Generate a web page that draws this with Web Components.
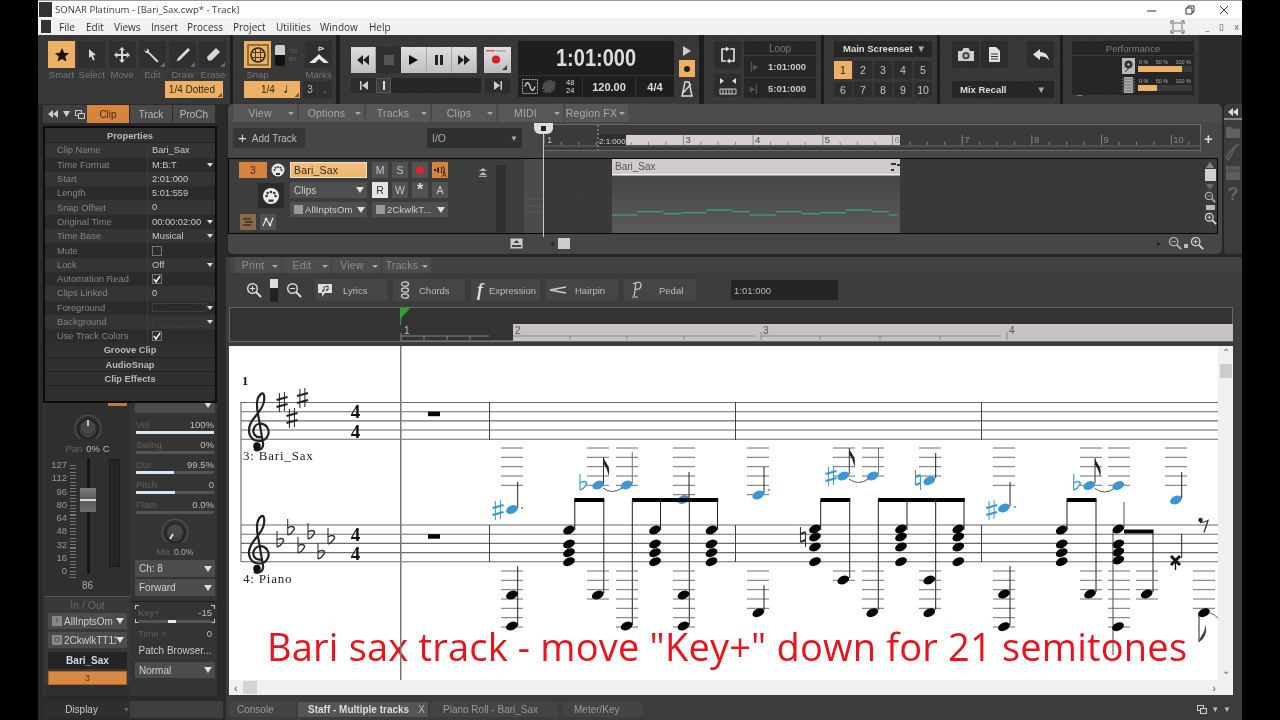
<!doctype html>
<html><head><meta charset="utf-8"><title>SONAR</title>
<style>html,body{margin:0;background:#000;height:100%;overflow:hidden}</style></head>
<body><sn-app></sn-app>
<script>
const BASE=`*{box-sizing:border-box}:host{font-family:"Liberation Sans",Arial,sans-serif}svg{display:block;flex:none}`;
function def(name,css,tpl){customElements.define(name,class extends HTMLElement{
  connectedCallback(){if(this.shadowRoot)return;const a=n=>this.getAttribute(n);
    this.attachShadow({mode:'open'}).innerHTML=`<style>${BASE}${css}</style>${tpl(a,this)}`}})}
const S=(w,h,inner,extra='')=>`<svg width="${w}" height="${h}" viewBox="0 0 ${w} ${h}" ${extra}>${inner}</svg>`;
const ICON={
 star:S(16,16,`<path d="M8 1l2.100 4.700 5 .5-3.800 3.400 1.100 5L8 12 3.600 14.600l1.100-5L.9 6.200l5-.5z" fill="#1b1410"/>`),
 select:S(14,16,`<path d="M4 2l7 6-3.200.5 2 4.200-1.700.8-2-4.200L4 11z" fill="#d8d8d8"/>`),
 move:S(18,18,`<path d="M9 1l3 3.200H10V8h3.800V6l3.200 3-3.200 3v-2H10v3.800h2L9 17l-3-3.200h2V10H4.200v2L1 9l3.200-3v2H8V4.200H6z" fill="#d8d8d8"/>`),
 edit:S(20,20,`<path d="M3 3l3.500 1 .7 3L16.500 16l-1.500 1.500L6.500 8.500 3.500 7.800 2 4.500l2 2 1.500-1.500-2-2z" fill="#d8d8d8"/>`),
 draw:S(18,18,`<path d="M14 2l2 2L6 14l-3.500 1.500L4 12z" fill="#d8d8d8"/>`),
 erase:S(18,18,`<path d="M12 2l4 4-8.500 8.500H4L3 11z" fill="#d8d8d8"/>`),
 snap:S(22,22,`<rect x="1" y="1" width="20" height="20" fill="none" stroke="#7a5a25" stroke-width="1.500"/><circle cx="11" cy="11" r="7" fill="none" stroke="#222" stroke-width="1.500"/><path d="M4 8.500h14M4 13.500h14M8.500 4v14M13.500 4v14" stroke="#4a3a1a"/>`),
 marks:S(22,18,`<path d="M11 1v4M11 1l5 1.500-5 1.500" stroke="#e8e8e8" fill="none"/><path d="M1 17l7-6 3-3 3 3 7 6h-5l-5-4-4 4z" fill="#e8e8e8"/>`),
 rew:S(14,10,`<path d="M7 0v10L1 5zM13 0v10L7 5z" fill="#222"/>`),
 ff:S(14,10,`<path d="M1 0v10l6-5zM7 0v10l6-5z" fill="#222"/>`),
 play:S(12,12,`<path d="M2 1v10l9-5z" fill="#111"/>`),
 pause:S(10,12,`<path d="M1 1h3v10H1zM6 1h3v10H6z" fill="#222"/>`),
 rec:S(24,24,`<path d="M2 3h9v1.500H2z" fill="#d55"/><path d="M12 3.500h10v.8H12z" fill="#777"/><circle cx="12" cy="12.500" r="4" fill="#d81e2a"/><path d="M23 23v-5l-5 5z" fill="#444"/>`),
 first:S(10,9,`<path d="M1 0h1.500v9H1zM9 0v9L3 4.500z" fill="#ccc"/>`),
 last:S(10,9,`<path d="M7.500 0H9v9H7.500zM1 0v9l6-4.500z" fill="#ccc"/>`),
 loop:S(16,18,`<path d="M6 3H2v12h4M10 3h4v12h-4" fill="none" stroke="#e4e4e4" stroke-width="1.600"/><path d="M6 .5L9.500 3 6 5.500zM10 12.500L6.500 15l3.500 2.500z" fill="#e4e4e4"/>`),
 keys:S(18,18,`<path d="M1 12h16v5H1z" fill="none" stroke="#ccc"/><path d="M4 12v5M7 12v5M10 12v5M13 12v5" stroke="#ccc"/><path d="M1 1l4 3-4 3zM17 1l-4 3 4 3z" fill="#ddd"/>`),
 cam:S(18,15,`<path d="M1 4h4l1.500-3h5L13 4h4v10H1z" fill="#cfcfcf"/><circle cx="9" cy="8.700" r="3.600" fill="#444"/><circle cx="9" cy="8.700" r="1.800" fill="#bbb"/>`),
 doc:S(13,17,`<path d="M1 1h7l4 4v11H1z" fill="#e2e2e2"/><path d="M3 8h7M3 10.500h7M3 13h7" stroke="#333"/>`),
 undo:S(18,14,`<path d="M8 1L1 6.500 8 12V8.500c4-.5 7 .5 9 4-.5-5-3-8-9-8.500z" fill="#e0e0e0"/>`),
 disk:S(13,16,`<rect x="0" y="0" width="13" height="16" fill="#b9b9b9"/><circle cx="6.500" cy="6.500" r="4" fill="#333"/><circle cx="6.500" cy="6.500" r="1.200" fill="#bbb"/><path d="M3 14l4-4" stroke="#333"/>`),
 chip:S(13,16,`<rect x="2" y="0" width="9" height="16" fill="#aaa"/><path d="M0 2h13M0 5h13M0 8h13M0 11h13M0 14h13" stroke="#777"/>`),
 sync:S(16,15,`<rect x=".5" y=".5" width="15" height="14" fill="#222" stroke="#aaa" stroke-dasharray="2 1"/><path d="M3 7.500c1.500-5 3.500-5 5 0s3.500 5 5 0" fill="none" stroke="#ccc" stroke-width="1.300"/>`),
 sync2:S(16,15,`<circle cx="8" cy="7.500" r="6.500" fill="#444"/><path d="M2 13L14 2M4 14L15 4M1 10L11 1" stroke="#666"/>`),
 metro:S(14,16,`<path d="M5 1h4l3 14H2z" fill="none" stroke="#ddd" stroke-width="1.400"/><path d="M3 12L11 3" stroke="#ddd" stroke-width="1.400"/>`),
 midi:S(14,14,`<circle cx="7" cy="7" r="6.500" fill="#e8e8e8"/><circle cx="3.500" cy="7" r="1" fill="#333"/><circle cx="10.500" cy="7" r="1" fill="#333"/><circle cx="7" cy="4" r="1" fill="#333"/><circle cx="4.500" cy="4.700" r="1" fill="#333"/><circle cx="9.500" cy="4.700" r="1" fill="#333"/><rect x="5" y="10" width="4" height="2" fill="#333"/>`),
 midiL:S(18,18,`<circle cx="9" cy="9" r="8" fill="#ececec"/><circle cx="4.500" cy="9" r="1.300" fill="#333"/><circle cx="13.500" cy="9" r="1.300" fill="#333"/><circle cx="9" cy="5" r="1.300" fill="#333"/><circle cx="5.700" cy="6" r="1.300" fill="#333"/><circle cx="12.300" cy="6" r="1.300" fill="#333"/><rect x="6.500" y="12.500" width="5" height="2.300" fill="#333"/>`),
 lanes:S(10,8,`<path d="M0 1h8M2 4h8M0 7h8" stroke="#333" stroke-width="1.400"/>`),
 auto:S(12,12,`<path d="M1 10L4 3l4 6 3-7" fill="none" stroke="#e8e8e8" stroke-width="1.200"/><circle cx="4" cy="3" r="1.300" fill="#eee"/><circle cx="8" cy="9" r="1.300" fill="#eee"/>`),
 mon:S(14,14,`<path d="M1 6h2v2H1zM4 5l2-1v6L4 9z" fill="#222"/><path d="M8 4q2 3 0 6M10 3q3 4 0 8" fill="none" stroke="#222"/><text x="9" y="14" font-size="7" font-family="Liberation Sans" fill="#222">A</text>`),
 arrows:S(8,9,`<path d="M4 0L8 3H0zM4 4l4 3H0z" fill="#b8b8b8"/><rect y="7.800" width="8" height="1" fill="#b8b8b8"/>`),
 strack:S(13,11,`<rect x=".5" y=".5" width="12" height="10" fill="#ccc"/><path d="M2 7h9v2H2z" fill="#444"/><path d="M6.500 2l3 3h-6z" fill="#444"/>`),
 folder:S(14,12,`<path d="M0 1h5l1 1.500h8V12H0z" fill="#616161"/>`),
 brush:S(16,18,`<path d="M14 1c-3 2-6 7-7 10L3 17c-2-2-2-5 1-6 1-3 5-8 10-10z" fill="none" stroke="#5e5e5e" stroke-width="1.500"/>`),
 kbd:S(14,14,`<rect width="14" height="14" fill="#5e5e5e"/><path d="M0 5h14M3 0v5M6 0v5M9 0v5M12 0v5" stroke="#444"/>`),
 lyrics:S(16,15,`<path d="M1 1h14v9H8l-3 4v-4H1z" fill="#ddd"/><path d="M7 8V4l4-1v4" fill="none" stroke="#444"/><circle cx="6" cy="8" r="1" fill="#444"/><circle cx="10" cy="7" r="1" fill="#444"/>`),
 chords:S(12,18,`<g fill="none" stroke="#ccc" stroke-width="1.300"><ellipse cx="6" cy="3" rx="3.500" ry="2.200"/><ellipse cx="6" cy="9" rx="3.500" ry="2.200"/><ellipse cx="6" cy="15" rx="3.500" ry="2.200"/></g>`),
 hairpin:S(18,8,`<path d="M17 1L1 4l16 3" fill="none" stroke="#ccc" stroke-width="1.300"/>`),
 pedal:S(14,18,`<path d="M3 3c4-3 9-2 8 2s-5 4-6 2M6 2c-1 5-1 9-2 13M2 16h6" fill="none" stroke="#ccc" stroke-width="1.200"/>`),
 tile:S(10,9,`<rect x=".5" y=".5" width="6" height="5" fill="none" stroke="#ccc"/><rect x="3.500" y="3.500" width="6" height="5" fill="#444" stroke="#ccc"/>`),
 corner:S(5,5,`<path d="M5 0v5H0z" fill="#6b6b6b"/>`)
};
const mag=(sign,s=16,c='#ddd')=>`<svg width="${s}" height="${s}" viewBox="0 0 16 16"><circle cx="6.500" cy="6.500" r="4.800" fill="none" stroke="${c}" stroke-width="1.400"/><path d="M10 10l5 5" stroke="${c}" stroke-width="2"/><path d="M4 6.500h5${sign=='+'?'M6.500 4v5':''}" stroke="${c}"/></svg>`;
const HATCH=`repeating-linear-gradient(135deg,#343434 0 1px,#3a3a3a 1px 3px)`;

def('sn-titlebar',`:host{display:flex;align-items:center;height:18px;background:#fff;border-top:1px solid #9a9a9a;font-size:9.600px;color:#3a3a3a;font-family:"Open Sans",sans-serif;padding:0 13px 0 1px}
.ic{width:13px;height:15px;background:#333;margin-right:3px}
.t{flex:1}.w{display:flex;align-items:center;color:#444}`,
()=>`<div class="ic"></div><div class="t">SONAR Platinum - [Bari_Sax.cwp* - Track]</div>
<div class="w">${S(10,10,'<path d="M0 6h9" stroke="#333"/>')}<span style="width:28px"></span>${S(10,10,'<path d="M1 3h6v6H1zM3 3V1h6v6H7" fill="none" stroke="#333"/>')}<span style="width:24px"></span>${S(10,10,'<path d="M1 1l8 8M9 1l-8 8" stroke="#333"/>')}</div>`);

def('sn-menubar',`:host{display:flex;align-items:center;height:17px;background:#f1f1f1;font-size:10px;color:#333;font-family:"Open Sans",sans-serif;padding-left:3px}
.ic{width:10px;height:13px;background:#333;margin-right:8px}
span{flex:none}.r{margin-left:auto;display:flex;align-items:center;gap:10px;padding-right:3px;color:#555;font-size:9px}`,
()=>{const xs=[['File',27],['Edit',28],['Views',37],['Insert',36],['Process',46],['Project',43],['Utilities',44],['Window',49],['Help',30]];
return `<div class="ic"></div>${xs.map(([t,w])=>`<span style="width:${w}px">${t}</span>`).join('')}
<div class="r">${S(15,14,'<path d="M1 4V1h3M11 1h3v3M14 10v3h-3M4 13H1v-3" fill="none" stroke="#555"/><rect x="3" y="3" width="9" height="8" fill="none" stroke="#777"/>')}<span style="margin-left:10px">_</span><span>▯</span><span>x</span></div>`});

def('sn-tool',`:host{display:block;width:27px;position:relative}
.b{width:27px;height:27px;background:#2f2f2f;display:flex;align-items:center;justify-content:center;position:relative}
.b.on{background:#ecb165}
.l{font-size:9.500px;color:#757575;text-align:center;margin:1px -3px 0;white-space:nowrap;display:flex;justify-content:center}
.c{position:absolute;right:1px;bottom:1px;display:block}`,
a=>`<div class="b ${a('on')!==null?'on':''}"><slot></slot>${a('corner')!==null?`<span class="c">${ICON.corner}</span>`:''}</div><div class="l">${a('label')}</div>`);

def('sn-pill',`:host{display:flex;align-items:center;height:17px;background:#ecb165;color:#33291a;font-size:10px;justify-content:flex-end;padding-right:8px;position:relative;flex:none}
i{position:absolute;right:1px;bottom:1px;width:4px;height:4px;background:linear-gradient(135deg,transparent 50%,#7d5a2a 50%)}`,
a=>`<slot></slot><i></i>`);

def('sn-tools',`:host{display:block;width:192px;height:69px;background:${HATCH};padding:6px 0 0 10px;flex:none}
.r{display:flex;gap:3.300px;height:40px}`,
()=>`<div class="r"><sn-tool label="Smart" on>${ICON.star}</sn-tool><sn-tool label="Select">${ICON.select}</sn-tool><sn-tool label="Move">${ICON.move}</sn-tool><sn-tool label="Edit" corner>${ICON.edit}</sn-tool><sn-tool label="Draw" corner>${ICON.draw}</sn-tool><sn-tool label="Erase" corner>${ICON.erase}</sn-tool></div>
<sn-pill style="width:58px;margin-left:117px">1/4 Dotted</sn-pill>`);

def('sn-snap',`:host{display:block;width:103px;height:69px;background:${HATCH};margin-left:3px;padding:6px 0 0 11px;flex:none}
.r{display:flex;height:40px}
.tg{width:10px;height:21px;margin:4px 0 0 4px;background:linear-gradient(#cfcfcf 0 10px,#111 10px);border-radius:2px}
.to{font-size:6px;color:#666;line-height:8px;margin:6px 0 0 4px;width:16px}
.r2{display:flex;align-items:center;font-size:10px;color:#bbb}
.c{width:14px;height:17px;background:#2f2f2f;display:flex;align-items:center;justify-content:center;margin-left:1px}
.n{font-size:15px;margin:-4px 0 0 8px;color:#222;line-height:10px}`,
()=>`<div class="r"><sn-tool label="Snap" on>${ICON.snap}</sn-tool><div class="tg"></div><div class="to">TO<br>BY</div><sn-tool label="Marks">${ICON.marks}</sn-tool></div>
<div class="r2"><sn-pill style="width:56px;justify-content:flex-start;padding-left:17px">1/4<span class="n">♩</span></sn-pill><span style="width:2px"></span><div class="c">3</div><div class="c">.</div></div>`);

def('sn-tbtn',`:host{display:flex;align-items:center;justify-content:center;width:25.200px;height:26px;background:linear-gradient(#dedede,#c0c0c0);border-right:1px solid #a8a8a8}`,()=>`<slot></slot>`);

def('sn-time',`:host{display:block;width:156px;height:56px;background:#1e1e1e;margin-left:6px;color:#dcdcdc;flex:none}
.big{height:34px;text-align:center;font:bold 20px/34px "Liberation Sans",sans-serif;transform:scaleY(1.150)}
.lo{display:flex;height:22px;border-top:1px solid #333;align-items:center;font-weight:bold;font-size:11px}
.lo>div{display:flex;align-items:center;justify-content:center;height:100%;border-left:1px solid #333}
.sg{font-size:7.500px;line-height:7.500px;text-align:center;font-weight:normal}`,
()=>`<div class="big">1:01:000</div><div class="lo"><div style="width:64px;border:0;gap:3px;justify-content:flex-start;padding-left:4px">${ICON.sync}${ICON.sync2}<span style="width:3px"></span><span class="sg">48<br>24</span></div><div style="width:53px">120.00</div><div style="width:39px">4/4</div></div>`);

def('sn-transport',`:host{display:flex;width:359px;height:69px;background:${HATCH};margin-left:4px;padding:6px 0 0 11px;flex:none}
.l{width:161px;flex:none;padding-top:6px}
.r{display:flex;height:26px}
.sq{width:10px;height:10px;background:#555}
.rec{margin-left:7px;width:27px;height:26px;background:linear-gradient(#e2e2e2,#bdbdbd);flex:none}
.r2{display:flex;align-items:center;height:15px;margin-top:5px}
.e{width:25px;height:15px;background:#2c2c2c;display:flex;align-items:center;justify-content:center;flex:none}
.sc{width:105px;height:15px;background:#262626;position:relative;flex:none}
.sc i{display:block;position:absolute;left:0;top:0;width:15px;height:15px;background:#3d3d3d;border:1px solid #555}
.sc i::after{content:"";position:absolute;left:6px;top:2px;width:2px;height:9px;background:#ddd}
.c{width:16px;margin-left:5px;display:flex;flex-direction:column;flex:none}
.c div{height:19px;display:flex;align-items:center;justify-content:center}
.on{background:#ecb165;height:17px!important;margin-bottom:2px}
.on i{width:6px;height:6px;border-radius:50%;background:#222;display:block}`,
()=>`<div class="l"><div class="r"><sn-tbtn>${ICON.rew}</sn-tbtn><sn-tbtn style="background:#2f2f2f;border:0"><span class="sq"></span></sn-tbtn><sn-tbtn>${ICON.play}</sn-tbtn><sn-tbtn>${ICON.pause}</sn-tbtn><sn-tbtn>${ICON.ff}</sn-tbtn><div class="rec">${ICON.rec}</div></div>
<div class="r2"><div class="e">${ICON.first}</div><div class="sc"><i></i></div><div class="e" style="margin-left:4px">${ICON.last}</div></div></div>
<sn-time></sn-time>
<div class="c"><div>${S(8,10,'<path d="M0 0v10l8-5z" fill="#ccc"/>')}</div><div class="on"><i></i></div><div>${ICON.metro}</div></div>`);

def('sn-loop',`:host{display:flex;width:117px;height:69px;background:${HATCH};margin-left:5px;padding:6px 0 0 10px;flex:none;color:#aaa}
.bc{width:27px;margin-right:3px}.bt{height:28px;background:#2d2d2d;display:flex;align-items:center;justify-content:center;margin-bottom:5px}
.bt+.bt{height:23px}
.p{width:72px;height:57px;background:#262626}
.h{height:15px;text-align:center;font-size:10px;line-height:15px;color:#777;border-bottom:1px solid #3a3a3a}
.w{display:flex;align-items:center;height:21px;font:bold 9.500px "Liberation Sans",sans-serif;color:#c8c8c8;padding-left:6px;gap:10px}
.w+.w{border-top:1px solid #3a3a3a}.w b{color:#555;font-size:10px;width:8px}`,
()=>`<div class="bc"><div class="bt">${ICON.loop}</div><div class="bt">${ICON.keys}</div></div>
<div class="p"><div class="h">Loop</div><div class="w"><b>|▸</b><span>1:01:000</span></div><div class="w"><b>▸|</b><span>5:01:000</span></div></div>`);

def('sn-screens',`:host{display:block;width:113px;height:69px;background:${HATCH};margin-left:3px;padding:6px 0 0 10px;flex:none;color:#c4c4c4}
.h{width:98px;height:16px;background:#262626;font:bold 9.500px/16px "Liberation Sans",sans-serif;color:#ddd;padding-left:9px;display:flex;justify-content:space-between;padding-right:6px}
.g{display:grid;grid-template-columns:repeat(5,18px);gap:3px 2px;margin-top:4px;font-size:10.500px}
.g div{height:18px;background:#2d2d2d;display:flex;align-items:center;justify-content:center}
.g .on{background:#ecb165;color:#222}.g .s{height:15px}`,
()=>`<div class="h"><span>Main Screenset</span><span style="color:#aaa">▼</span></div>
<div class="g"><div class="on">1</div><div>2</div><div>3</div><div>4</div><div>5</div><div class="s">6</div><div class="s">7</div><div class="s">8</div><div class="s">9</div><div class="s">10</div></div>`);

def('sn-mix',`:host{display:block;width:120px;height:69px;background:${HATCH};margin-left:3px;padding:6px 0 0 12px;flex:none}
.r{display:flex;height:34px}.b{width:27px;height:27px;background:#2d2d2d;display:flex;align-items:center;justify-content:center;margin-right:2px}
.d{width:102px;height:17px;margin-top:6px;background:#262626;color:#ddd;font:bold 9.500px/17px "Liberation Sans",sans-serif;padding:0 8px;display:flex;justify-content:space-between}`,
()=>`<div class="r"><div class="b">${ICON.cam}</div><div class="b">${ICON.doc}</div><div class="b" style="margin-left:17px">${ICON.undo}</div></div><div class="d"><span>Mix Recall</span><span style="color:#aaa">▼</span></div>`);

def('sn-perf',`:host{display:block;width:136px;height:69px;background:${HATCH};margin-left:3px;padding:6px 0 0 9px;flex:none}
.p{width:122px;height:54px;background:#262626;position:relative}
.h{height:15px;text-align:center;font-size:9.500px;line-height:15px;color:#7f7f7f;border-bottom:1px solid #3a3a3a}
.m{margin-left:50px;display:flex;align-items:center;height:19px;gap:3px}
.t{font-size:5.500px;color:#aaa;display:flex;justify-content:space-between;width:54px;line-height:7px;padding:0 1px}
.b{width:54px;height:6px;background:#3a3a3a}.b i{display:block;height:6px;background:#ecb165}
.d{font-size:9px;color:#aaa;position:absolute;left:5px;bottom:-1px}`,
()=>`<div class="p"><div class="h">Performance</div>
<div class="m">${ICON.disk}<div><div class="t"><span>0 %</span><span>50 %</span><span>100 %</span></div><div class="b"><i style="width:44px"></i></div></div></div>
<div class="m">${ICON.chip}<div><div class="t"><span>0 %</span><span>50 %</span><span>100 %</span></div><div class="b"><i style="width:19px"></i></div></div></div>
<div class="d">_</div></div>`);

def('sn-toolbar',`:host{display:flex;height:69px;background:#1d1d1d}
.f{flex:1;background:#2b2b2b}`,
()=>`<sn-tools></sn-tools><sn-snap></sn-snap><sn-transport></sn-transport><sn-loop></sn-loop><sn-screens></sn-screens><sn-mix></sn-mix><sn-perf></sn-perf><div class="f"></div>`);

def('sn-props',`:host{display:block;width:174px;height:277px;margin-top:3px;background:#2f2f2f;border:2px solid #0c0c0c;color:#c9c9c9;font-size:9.300px;position:relative}
.r{display:grid;grid-template-columns:91px 1fr;height:14.300px;align-items:center;padding-left:12px}
.r:nth-child(odd){background:#343434}.r:nth-child(even){background:#2b2b2b}
.l{color:#848484}
.v{position:relative;padding-left:4px;height:100%;line-height:14.300px;border-left:1px solid #3f3f3f;margin-left:-1px;display:flex;align-items:center}
.a{position:absolute;right:2px;top:5px;border:3px solid transparent;border-top:4px solid #ddd;border-bottom:0}
.h{height:14.300px;text-align:center;font-weight:bold;line-height:14.300px;color:#b9b9b9;background:#303030;border-bottom:1px solid #222}
.cb{width:10px;height:10px;border:1px solid #777;background:#2b2b2b;display:flex;align-items:center;justify-content:center}
.sw{width:55px;height:9px;border:1px solid #3d3d3d;background:linear-gradient(to top right,transparent 49%,#3b3b3b 50%,transparent 51%),linear-gradient(to bottom right,transparent 49%,#3b3b3b 50%,transparent 51%)}`,
()=>{const ck=S(8,8,'<path d="M1 4l2 3 4-6" fill="none" stroke="#eee" stroke-width="1.600"/>');
const rows=[['Clip Name','Bari_Sax'],['Time Format','M:B:T',1],['Start','2:01:000'],['Length','5:01:559'],['Snap Offset','0'],['Original Time','00:00:02:00',1],['Time Base','Musical',1],['Mute','<span class="cb"></span>'],['Lock','Off',1],['Automation Read',`<span class="cb">${ck}</span>`],['Clips Linked','0'],['Foreground','<span class="sw"></span>',1],['Background','<span class="sw"></span>',1],['Use Track Colors',`<span class="cb">${ck}</span>`]];
return `<div class="h" style="margin-top:1px">Properties</div>`+rows.map(([l,v,d])=>`<div class="r"><span class="l">${l}</span><span class="v">${v}${d?'<i class="a"></i>':''}</span></div>`).join('')
+['Groove Clip','AudioSnap','Clip Effects'].map(t=>`<div class="h">${t}</div>`).join('')});

def('sn-knob',`:host{display:block;width:28px;height:28px;position:relative;margin:0 auto}`,
a=>`<svg width="28" height="28" viewBox="0 0 28 28"><path d="M6 23.500A13 13 0 1 1 22 23.500" fill="none" stroke="#4d4d4d" stroke-width="1.500"/><circle cx="14" cy="14" r="9.500" fill="#3c3c3c" stroke="#1f1f1f" stroke-width="1.500"/><circle cx="14" cy="12" r="7" fill="#474747"/><path d="${a('tick')}" stroke="#f0f0f0" stroke-width="1.500"/></svg>`);

def('sn-drop',`:host{display:flex;align-items:center;height:16px;background:#4c4c4c;color:#cfcfcf;font-size:10px;padding:0 3px 0 4px;white-space:nowrap;overflow:hidden;flex:none}
.t{flex:1;overflow:hidden;display:flex;align-items:center}i{border:4px solid transparent;border-top:6px solid #ddd;border-bottom:0;flex:none}`,
a=>`<span class="t"><slot></slot></span><i></i>`);

def('sn-slider',`:host{display:block;height:14px;margin-bottom:6px;position:relative;padding:0 1px}
.t{display:flex;justify-content:space-between;height:11px;line-height:11px;font-size:9.500px;color:#bdbdbd}.t span:first-child{color:#5f5f5f}
.b{height:2.500px;background:#545454;margin-top:1px}.b i{display:block;height:100%;background:#d7e6f0}`,
a=>`<div class="t"><span>${a('label')}</span><span>${a('value')}</span></div><div class="b"><i style="width:${a('pct')}%"></i></div>`);

def('sn-strip',`:host{display:flex;width:174px;height:293px;background:#343434;color:#bbb;font-size:9.500px;position:relative}
.L{width:85px;margin-left:2px;flex:none;background:#2f2f2f}
.R{width:83px;margin-left:4px;flex:none;padding:0 2px 0 1px}
.tk{height:6px;display:flex;justify-content:flex-end;padding-right:3px}.tk i{display:block;width:19px;height:3px;background:#c07a3c}
.pn{display:flex;justify-content:center;gap:4px;height:11px;line-height:11px;margin:0 0 4px;color:#bbb}.pn span:first-child{color:#666}
.f{height:120px;display:flex;position:relative}
.n{width:22px;display:flex;flex-direction:column;align-items:flex-end;font-size:9.500px;color:#999}
.n span{height:13.300px;line-height:13.300px}
.tc{width:6px;margin-left:3px;height:115px;margin-top:7px;background:repeating-linear-gradient(#777 0 1px,transparent 1px 3.300px)}
.tr{width:3px;height:116px;background:#151515;margin-left:11px}
.mt{width:11px;height:108px;background:#252525;margin:1px 0 0 19px;border:1px solid #1c1c1c}
.cap{position:absolute;left:35px;top:30px;width:16px;height:24px;background:linear-gradient(#7d7d7d,#5b5b5b 45%,#cfcfcf 46%,#e8e8e8 54%,#5b5b5b 55%,#6e6e6e);border-radius:1px}
.v{height:16px;text-align:center;line-height:16px;color:#aaa;font-size:10px;margin-bottom:2px}
.sec{background:#383838;border-top:1px solid #5a5a5a;padding:0 3px}
.ti{height:16px;line-height:16px;text-align:center;font-size:10.500px;color:#686868}
.nm{margin-top:4px;height:17px;background:#242424;color:#cfdbe6;text-align:center;line-height:17px;font-weight:bold;font-size:10px}
.or{margin-top:2px;height:14px;background:#d88a45;border:1px solid #a9672e;color:#5a3518;text-align:center;line-height:12px;font-size:9.500px}
.io{width:10px;height:10px;background:#888;color:#333;font-size:7px;line-height:10px;text-align:center;display:block;margin-right:2px;flex:none}
.mx{display:flex;justify-content:center;gap:4px;height:10px;line-height:10px;color:#aaa;font-size:8.500px;margin-bottom:3px}.mx span:first-child{color:#666}
.sep{border-top:1px solid #1b1b1b;margin:5px -3px 3px}
.key{position:relative;height:18px;padding:2px 0 0;margin-bottom:4px;background:
 linear-gradient(#ccc,#ccc) 0 0/4px 1px no-repeat,linear-gradient(#ccc,#ccc) 0 0/1px 4px no-repeat,
 linear-gradient(#ccc,#ccc) 100% 0/4px 1px no-repeat,linear-gradient(#ccc,#ccc) 100% 0/1px 4px no-repeat,
 linear-gradient(#ccc,#ccc) 0 100%/4px 1px no-repeat,linear-gradient(#ccc,#ccc) 0 100%/1px 4px no-repeat,
 linear-gradient(#ccc,#ccc) 100% 100%/4px 1px no-repeat,linear-gradient(#ccc,#ccc) 100% 100%/1px 4px no-repeat}
.row{display:flex;justify-content:space-between;padding:0 3px;height:11px;line-height:11px;color:#bdbdbd}.row span:first-child{color:#5f5f5f}
.kb{height:2.500px;margin:2px 3px 0;background:#555;position:relative}.kb i{position:absolute;left:30px;width:8px;height:100%;background:#e8e8e8}
.pb{text-align:center;height:18px;line-height:14px;color:#ccc;font-size:10px;margin-top:3px}`,
()=>`<div class="L"><div class="tk"><i></i></div><div style="height:6px"></div><sn-knob tick="M14 5v6"></sn-knob><div class="pn"><span>Pan</span><span>0% C</span></div>
<div class="f"><div class="n">${[127,112,96,80,64,48,32,16,0].map(n=>`<span>${n}</span>`).join('')}</div><div class="tc"></div><div class="tr"></div><div class="mt"></div><div class="cap"></div></div>
<div class="v">86</div>
<div class="sec"><div class="ti">In / Out</div><sn-drop><span class="io">I</span>AllInptsOm</sn-drop><div style="height:3px"></div><sn-drop><span class="io">O</span>2CkwlkTT11</sn-drop><div class="nm">Bari_Sax</div><div class="or">3</div></div></div>
<div class="R"><div style="height:11px;overflow:hidden"><sn-drop style="margin-top:-6px">&nbsp;</sn-drop></div><div style="height:5px"></div>
<sn-slider label="Vel" value="100%" pct="100"></sn-slider><sn-slider label="Swing" value="0%" pct="0"></sn-slider><sn-slider label="Dur" value="99.5%" pct="49"></sn-slider><sn-slider label="Pitch" value="0" pct="50"></sn-slider><sn-slider label="Flam" value="0.0%" pct="0"></sn-slider>
<sn-knob tick="M9 20l3-5"></sn-knob><div class="mx"><span>Mix</span><span>0.0%</span></div>
<sn-drop style="height:17px">Ch: 8</sn-drop><div style="height:2px"></div><sn-drop style="height:17px">Forward</sn-drop>
<div class="sep"></div>
<div class="key"><div class="row"><span>Key+</span><span>-15</span></div><div class="kb"><i></i></div></div>
<div class="row" style="height:14px;line-height:14px"><span>Time +</span><span>0</span></div>
<div class="pb">Patch Browser...</div><sn-drop>Normal</sn-drop></div>`);

def('sn-inspector',`:host{display:block;width:188px;flex:none;padding-left:5px;background:#2a2a2a}
.tabs{display:flex;height:18px;align-items:stretch;font-size:10px;margin-top:1px;width:175px}
.ic{width:44px;display:flex;align-items:center;gap:5px;padding-left:5px;color:#ccc;background:#3f3f3f}
.t{width:42px;margin-right:1px;background:#4a4a4a;color:#bbb;display:flex;align-items:center;justify-content:center}
.t.on{background:#d6853f;color:#4a2a10}
.disp{display:flex;height:17px;margin-top:5px;background:#3e3e3e;width:180px}
.disp div{width:87px;background:#2e2e2e;color:#c9c9c9;font-size:10px;display:flex;align-items:center;justify-content:center;gap:25px;padding-left:22px}`,
()=>`<div class="tabs"><div class="ic">${S(10,8,'<path d="M5 0v8L0 4zM10 0v8L5 4z" fill="#ccc"/>')}${S(7,6,'<path d="M0 0h7L3.500 6z" fill="#ccc"/>')}${ICON.tile}</div><div class="t on">Clip</div><div class="t">Track</div><div class="t">ProCh</div></div>
<sn-props></sn-props><sn-strip></sn-strip>
<div class="disp"><div>Display<span style="color:#666;font-size:7px">▼</span></div></div>`);

def('sn-mbar',`:host{display:flex;height:18px;background:#4c4c4c;padding-left:4px;border-radius:5px 5px 0 0;flex:none}
.i{display:flex;align-items:center;justify-content:center;position:relative;background:var(--it,#575757);margin-right:1px;color:var(--tx,#a8a8a8);font-size:10.500px;height:100%;border-left:1px solid #484848;padding-right:10px;letter-spacing:.2px}
.i::after{content:"";position:absolute;right:3px;top:8px;border:3px solid transparent;border-top:3px solid #aaa;border-bottom:0}`,
a=>a('items').split('|').map(s=>{const[t,w]=s.split(':');return `<div class="i" style="width:${w}px">${t}</div>`}).join(''));

def('sn-ruler',`:host{display:block;flex:none;margin-top:1px}`,
(a)=>{const out=[];const x0=1;
 for(let i=0;i<10;i++){const x=x0+i*69.7;for(let k=1;k<4;k++)out.push(`<path d="M${x+k*17.4} 18v3" stroke="#888"/>`);out.push(`<path d="M${x} 11v10" stroke="#888"/>`);
  if(i!=1&&i!=0)out.push(`<text x="${x+2}" y="19" font-size="9.500" font-family="Liberation Sans" fill="${i<5?'#444':'#888'}">${i+1}</text>`)}
 return `<svg width="658" height="27" viewBox="0 0 658 27"><rect x=".5" y=".5" width="657" height="26" fill="#3a3a3a" stroke="#6a6a6a"/><path d="M0 22h658" stroke="#666"/><rect x="83" y="11" width="274" height="10" fill="#d5cfd0"/>${out.join('')}<text x="4" y="19" font-size="9.500" font-family="Liberation Sans" fill="#bbb">1</text><rect x="55" y="10" width="28" height="12" fill="#2e2e2e"/><text x="56" y="19.500" font-size="8" font-family="Liberation Sans" fill="#ddd">2:1:000</text><path d="M55 1v25" stroke="#aaa" stroke-dasharray="2 2"/></svg>`});

def('sn-tb',`:host{display:flex;align-items:center;justify-content:center;width:16px;height:16px;background:#525252;color:#c6c6c6;font-size:10.500px;flex:none}`,()=>`<slot></slot>`);

def('sn-track-header',`:host{display:flex;width:295px;height:74px;background:#3d3d3d;padding:3px 0 0 10px;flex:none;position:relative}
.L{width:46px;flex:none;margin-right:5px}
.L1{display:flex;align-items:center;height:16px;gap:4px}
.num{width:29px;height:16px;background:#d6853f;text-align:center;font-size:10.500px;line-height:16px;color:#4a2a10}
.big{width:26px;height:25px;background:#2b2b2b;margin:5px 0 0 19px;display:flex;align-items:center;justify-content:center}
.L3{display:flex;gap:4px;margin-top:6px;padding-left:1px}
.sq{width:16px;height:16px;background:#525252;display:flex;align-items:center;justify-content:center}
.M{width:77px;flex:none;margin-right:5px;display:flex;flex-direction:column;gap:4px}
.nm{height:16px;background:linear-gradient(#f3c07d,#ecb570);border:1px solid #e9e3d8;font-size:10.500px;line-height:14px;padding-left:3px;color:#3a2a18;letter-spacing:.2px}
.b{display:flex;gap:4px}
.R{width:76px;flex:none;display:flex;flex-direction:column;gap:4px}
.sb{display:block;width:9px;height:9px;background:#999;margin-right:2px;flex:none}
.x{width:15px;margin-left:31px;padding-top:6px}
.y{width:10px;height:67px;background:#303030;margin:3px 0 0 2px}`,
()=>`<div class="L"><div class="L1"><div class="num">3</div>${ICON.midi}</div><div class="big">${ICON.midiL}</div><div class="L3"><div class="sq" style="background:#8a6a48">${ICON.lanes}</div><div class="sq">${ICON.auto}</div></div></div>
<div class="M"><div class="nm">Bari_Sax</div><sn-drop style="height:16px;background:#4f4f4f">Clips</sn-drop><sn-drop style="height:15px;background:#4f4f4f;font-size:9.500px;letter-spacing:.1px;padding-right:2px"><span class="sb"></span>AllInptsOm</sn-drop></div>
<div class="R"><div class="b"><sn-tb>M</sn-tb><sn-tb>S</sn-tb><sn-tb><span style="width:8px;height:8px;border-radius:50%;background:#e3242f"></span></sn-tb><sn-tb style="background:#d6853f">${ICON.mon}</sn-tb></div>
<div class="b"><sn-tb style="background:#e4e4e4;color:#333">R</sn-tb><sn-tb>W</sn-tb><sn-tb style="font-size:16px;font-weight:bold;color:#ddd">*</sn-tb><sn-tb>A</sn-tb></div>
<sn-drop style="height:15px;background:#4f4f4f;font-size:9.500px;letter-spacing:.1px"><span class="sb"></span>2CkwlkT...</sn-drop></div>
<div class="x">${ICON.arrows}</div><div class="y"></div>`);

def('sn-clips',`:host{display:block;flex:none;width:680px;height:74px}`,
()=>{const segs=[[30,88,342],[88,148,332],[148,190,338],[190,248,335],[248,308,327],[308,348,332],[348,408,342],[408,468,332],[468,510,338],[510,570,335],[570,628,327],[628,668,332],[668,688,342]];
 const gx=x=>(600+x/2.306-525).toFixed(1), gy=y=>(100+y/3-158).toFixed(1);
 return `<svg width="680" height="74" viewBox="0 0 680 74"><defs><linearGradient id="g" x1="0" y1="0" x2="0" y2="1"><stop offset="0" stop-color="#454545"/><stop offset="1" stop-color="#5a5a5a"/></linearGradient></defs>
 <rect width="680" height="74" fill="#393939"/><rect width="18" height="74" fill="#4b4b4b"/><path d="M18 0v74" stroke="#5a5a5a"/><path d="M1 40h17M1 47h17M1 53h17" stroke="#5a5a5a"/>
 <rect x="88" y="15" width="288" height="59" fill="url(#g)"/><rect x="88" y="0" width="288" height="16" fill="#cfcacd"/><rect x="88" y="15" width="288" height="1.500" fill="#f2f2f2"/><text x="91" y="11" font-size="10" font-family="Liberation Sans" fill="#555">Bari_Sax</text>
 <path d="M367 4h5v2h-5zM373 5h3v2h-3zM367 10h3v2h-3z" fill="#333"/>
 ${segs.map(([a,b,y])=>`<path d="M${gx(a)} ${gy(y)}H${gx(b)}" stroke="#3aa56c" stroke-width="1.300"/>`).join('')}<rect x="54" y="36" width="1" height="1" fill="#666"/></svg>`});

def('sn-track',`:host{display:flex;flex-direction:column;width:994px;height:150px;background:#464646;border-radius:5px;position:relative;flex:none;margin-left:2px}
.tools{display:flex;height:36px;flex:none;position:relative;padding:1px 0 0 5px;align-items:flex-start}
.add{width:72px;height:20px;background:#363636;margin-top:5px;display:flex;align-items:center;gap:5px;padding-left:5px;color:#bbb;font-size:10px;flex:none}
.io{width:95px;height:20px;background:#303030;margin:5px 0 0 122px;display:flex;align-items:center;justify-content:space-between;padding:0 4px 0 5px;color:#aaa;font-size:10.500px;flex:none}
.plus{color:#ddd;font-size:15px;font-weight:bold;margin:7px 0 0 3px;flex:none}
.rows{display:flex;height:76px;border:1.500px solid #050505;flex:none;width:990px;background:#393939}
.sb{width:12px;flex:none;background:#3b3b3b;display:flex;flex-direction:column;align-items:center;padding-top:3px;gap:1px}
.sb i.t{width:11px;height:12px;background:#d4d0d0;display:block}
.up{border:4px solid transparent;border-bottom:6px solid #888;border-top:0}.dn{border:4px solid transparent;border-top:6px solid #666;border-bottom:0;margin-top:2px}
.bot{display:flex;align-items:center;height:18px;position:relative;padding-left:282px}
.thumb{width:12px;height:11px;background:#cfcbcb;margin-left:4px}
.zm{margin-left:auto;display:flex;align-items:center;gap:1px;padding-right:18px}
.ph{position:absolute;left:306px;top:19px;width:19px;height:11px;background:#ddd;border-radius:0 0 6px 6px;display:flex;align-items:center;justify-content:center}
.ph i{width:5px;height:5px;background:#222}
.ln{position:absolute;left:315px;top:30px;width:1px;height:103px;background:#c8c8c8}`,
()=>`<sn-mbar items="View:65|Options:66|Tracks:65|Clips:65|MIDI:66|Region FX:64"></sn-mbar>
<div class="tools"><div class="add"><span style="font-size:15px;line-height:14px;color:#ddd">+</span><span>Add Track</span></div><div class="io"><span>I/O</span><span style="font-size:8px">▼</span></div><sn-ruler style="margin-left:21px"></sn-ruler><span class="plus">+</span></div>
<div class="rows"><sn-track-header></sn-track-header><sn-clips></sn-clips><div class="sb"><i class="up"></i><i class="t"></i><i class="dn"></i>${mag('-',12,'#bbb')}<span style="width:9px;height:5px;background:#bbb;margin:1px 0"></span>${mag('+',13,'#ddd')}</div></div>
<div class="bot">${ICON.strack}<span style="color:#222;font-size:8px;margin-left:27px">◂</span><div class="thumb"></div><div class="zm"><span style="color:#222;font-size:8px;margin-right:6px">▸</span>${mag('-',14,'#bbb')}<span style="width:4px;height:4px;background:#bbb;margin:6px 1px 0"></span>${mag('+',14,'#ddd')}</div></div>
<div class="ph"><i></i></div><div class="ln"></div>`);

def('sn-side',`:host{display:flex;flex-direction:column;align-items:center;width:18px;margin-left:2px;height:150px;background:#3c3c3c;border-radius:4px 0 0 4px;padding-top:1px;flex:none;gap:5px}
.h{height:15px;width:100%;border-bottom:2px solid #888;display:flex;justify-content:center;align-items:center;margin-bottom:1px}
.q{font:bold 18px "Liberation Sans",sans-serif;color:#666;line-height:18px}`,
()=>`<div class="h">${S(10,8,'<path d="M5 0v8L0 4zM10 0v8L5 4z" fill="#ddd"/>')}</div>${ICON.folder}${ICON.brush}${ICON.kbd}<div class="q">?</div>`);

const Bl='#3a96d4';
function ln(x1,y1,x2,y2,c='#333',w=1){return `<path d="M${x1} ${y1}L${x2} ${y2}" stroke="${c}" stroke-width="${w}" fill="none"/>`}
const head=(x,y,c='#050505')=>`<ellipse cx="${x}" cy="${y}" rx="6.200" ry="4" transform="rotate(-24 ${x} ${y})" fill="${c}"/>`;
const stem=(x,a,b,c='#222')=>ln(x,a,x,b,c,1);
const dot=(x,y,c=Bl)=>`<circle cx="${x}" cy="${y}" r="1" fill="${c}"/>`;
const UP=[448,457.3,466.7,476,485.3,494.7],DN=[571,580.3,589.7,599,608.3,617.7,627];
const led=(x,ys)=>ys.map(y=>ln(x,y,x+22,y,'#5f5f5f',.9)).join('');
const sharp=(x,y,c=Bl)=>ln(x-2.600,y-9,x-2.600,y+10,c,1)+ln(x+2.400,y-10,x+2.400,y+9,c,1)+ln(x-5.500,y-2,x+5.500,y-5,c,2.300)+ln(x-5.500,y+5,x+5.500,y+2,c,2.300);
const flat=(x,y,c=Bl)=>ln(x-3,y-9,x-3,y+7,c,1.100)+`<path d="M${x-3} ${y}C${x+1} ${y-3} ${x+5} ${y-1} ${x+3} ${y+2}C${x+2} ${y+4} ${x} ${y+6} ${x-3} ${y+7}" fill="none" stroke="${c}" stroke-width="1.500"/>`;
const natural=(x,y,c=Bl)=>ln(x-2.500,y-10,x-2.500,y+5,c,1.100)+ln(x+2.500,y-5,x+2.500,y+10,c,1.100)+ln(x-2.500,y-3,x+2.500,y-5,c,2)+ln(x-2.500,y+5,x+2.500,y+3,c,2);
const flag=(x,y)=>`<path d="M${x} ${y}c1 6 8 8 5 19c-1-7-3-10-5-12z" fill="#222"/>`;
const tie=(a,b,y)=>`<path d="M${a} ${y+3}Q${(a+b)/2} ${y+10} ${b} ${y+3}" fill="none" stroke="#555" stroke-width="1"/>`;
const beam=(a,b,y=498,h=4)=>`<rect x="${a}" y="${y}" width="${b-a+.5}" height="${h}" fill="#050505"/>`;
const ch=(x,ys)=>ys.map(y=>head(x,y)).join('');
const num=(x,y,t)=>`<text x="${x}" y="${y}" font-family="Liberation Serif" font-weight="bold" font-size="19" text-anchor="middle" fill="#111">${t}</text>`;
const clef=(dy)=>`<g transform="translate(0 ${dy})"><path d="M261 437C255 438 252 433 254 428C256 423 263 422 267 427C271 433 267 441 259 441C251 441 247 433 250 425C253 416 263 411 264 401C265 395 263 392 261 394C257 397 256 404 258 414L263 443C264 449 258 452 254 449" fill="none" stroke="#222" stroke-width="2.200"/><circle cx="257" cy="446" r="3.800" fill="#111"/></g>`;
function score(){
 let s='';
 [[402.5,411.7,420.9,430,439.3],[525,534.2,543.4,552.6,561.8]].forEach(l=>l.forEach(y=>s+=ln(241,y,1219,y,'#6b6b6b',1.100)));
 s+=ln(241,402,241,562,'#666',1.100);[489.500,735.500,981.500].forEach(x=>{s+=ln(x,402,x,440,'#444',1)+ln(x,525,x,562,'#444',1)});
 s+=clef(0)+clef(122.500);
 s+=sharp(282,402,'#222')+sharp(292,418,'#222')+sharp(302.500,398,'#222');
 [[280,540],[290.700,528],[301,546],[311,532],[321,552],[331,537]].forEach(([x,y])=>s+=flat(x,y,'#333'));
 s+=num(355.500,418,'4')+num(355.500,437.500,'4')+num(355.500,540.500,'4')+num(355.500,560,'4');
 s+=`<rect x="428" y="411.700" width="12" height="4.500" fill="#050505"/><rect x="428" y="534.200" width="12" height="4.500" fill="#050505"/>`;
 s+=led(501,UP.slice(0,5))+sharp(498,510)+stem(517.700,482,508)+head(512,509.500,Bl)+dot(522,508);
 s+=led(587,UP.slice(0,5))+led(616,UP.slice(0,5))+flat(583,483)+head(598.300,485,Bl)+head(626.700,485,Bl)+stem(603.500,457,483,'#333')+flag(603.500,457)+tie(603,622,485)+stem(632.300,452,483,'#777');
 s+=led(673,UP)+head(683.300,499.500,Bl)+stem(689,472,498);
 s+=led(747,UP)+head(758.300,495,Bl)+stem(764,467,493)+dot(769,490);
 s+=led(833,UP.slice(0,4))+led(862,UP.slice(0,4))+sharp(831,476)+head(843.300,476,Bl)+head(872.700,476,Bl)+stem(849.300,448,474,'#333')+flag(849.300,448)+tie(849,868,476)+stem(878.500,448,474,'#777');
 s+=led(919,UP.slice(0,4))+natural(918,480)+head(929.300,480.700,Bl)+stem(935.700,453,478);
 s+=led(993,UP.slice(0,5))+sharp(991.700,510)+head(1004,508,Bl)+dot(1015,507)+stem(1010,482,506);
 s+=led(1080,UP.slice(0,5))+led(1108,UP.slice(0,5))+flat(1076.700,483)+head(1089.300,485.500,Bl)+head(1118.300,485.500,Bl)+stem(1095,458,483,'#333')+flag(1095,458)+tie(1095,1114,485.500);
 s+=led(1165,UP.slice(0,5))+head(1176,500,Bl)+stem(1181.700,472,498);
 const A=[530,544,552.700,561.700],B=[529,537,547,561.700];
 s+=led(501,DN)+stem(517.700,566,626)+ch(512,[595,626]);
 s+=ch(569,A)+stem(574.800,500,530)+beam(574.300,603.800)+stem(603.800,500,593)+led(587,DN.slice(0,4))+head(597.800,595);
 s+=beam(632,717.800)+stem(632.300,500,625)+led(616,DN)+head(626.700,626);
 s+=ch(655,A)+stem(660.500,500,530)+stem(689.300,500,625)+led(673,DN)+ch(683.500,[595,626]);
 s+=ch(711.500,A)+stem(717.500,500,530);
 s+=led(747,DN.slice(0,5))+head(758.300,612.700)+stem(764,585,610);
 s+=natural(803,537,'#333')+ch(815,B)+stem(820.700,500,530)+beam(820.500,849.800)+stem(849.700,500,578)+led(833,DN.slice(0,2))+head(843.300,580);
 s+=beam(878,964.300)+stem(878.300,500,610)+led(862,DN.slice(0,5))+head(872.300,612.700);
 s+=ch(901,B)+stem(907,500,530)+stem(935.700,500,610)+led(919,DN.slice(0,5))+ch(929.300,[580,612.700]);
 s+=ch(958.300,B)+stem(964,500,530);
 s+=led(993,DN)+stem(1010,566,625)+ch(1004,[594,626.700]);
 s+=ch(1061.700,A)+stem(1067,500,530)+beam(1066.700,1096)+stem(1096,500,592)+led(1080,DN.slice(0,4))+head(1090,594);
 s+=ch(1118.300,[529,544,552,560])+stem(1124,502,527,'#555')+stem(1113,532,655,'#444')+led(1108,DN)+head(1118,626.700);
 s+=beam(1124,1153,529.500,4)+stem(1153,532,592)+led(1136,DN.slice(0,4))+head(1146.700,594);
 s+=stem(1181.700,534,558)+`<path d="M1171 556l9 9M1180 556l-9 9" stroke="#111" stroke-width="3"/>`+ln(1175.500,560,1175.500,570,'#111',1.300);
 s+=`<circle cx="1200.500" cy="520" r="2.200" fill="#222"/><path d="M1200 522.500q4 0 8-2l-4 12" fill="none" stroke="#333" stroke-width="1.300"/>`;
 s+=led(1193,DN.slice(0,5))+head(1204,612.700)+stem(1199,613,642)+`<path d="M1199 642c1-7 7-9 6-18c3 8 0 14-6 18z" fill="#222" opacity=".85"/><path d="M1210 613q4 1 8 5" fill="none" stroke="#666"/>`;
 return s;
}
def('sn-score',`:host{display:block;position:relative;flex:none;width:989px;height:334px;background:#fff;overflow:hidden}
.cap{position:absolute;left:38px;top:277px;color:#e8131c;font:38px/46px "Open Sans",sans-serif;white-space:nowrap;letter-spacing:.2px}`,
()=>`<svg width="989" height="334" viewBox="229 346 989 334">${score()}<text x="242" y="385" font-family="Liberation Serif" font-weight="bold" font-size="12.500" fill="#111">1</text>
<text x="243" y="460" font-family="Liberation Serif" font-size="13" letter-spacing=".8" fill="#222">3: Bari_Sax</text><text x="243" y="583" font-family="Liberation Serif" font-size="13" letter-spacing=".8" fill="#222">4: Piano</text></svg>
<div class="cap">Bari sax track - move "Key+" down for 21 semitones</div>
<svg style="position:absolute;left:171px;top:0" width="2" height="334"><rect width="1.500" height="334" fill="#777"/></svg>`);

def('sn-staff',`:host{display:block;height:439px;background:#3c3c3c;padding-left:3px;flex:none;margin-top:3px}
.tr{display:flex;align-items:center;height:34px;padding-left:17px;color:#bdbdbd;font-size:9.500px;flex:none}
.b{height:22px;background:#454545;display:flex;align-items:center;margin-right:6px;flex:none}
.sl{width:8px;height:23px;background:linear-gradient(#ddd 0 9px,#222 9px);margin:0 8px}
.tm{width:107px;height:20px;background:#242424;color:#bbb;font-size:9.500px;display:flex;align-items:center;padding-left:3px;margin-left:29px}
.rl{display:block;margin:0}
.mid{display:flex;margin:4px 0 0}
.v{width:15px;background:#f0f0f0;position:relative;display:flex;flex-direction:column;align-items:center;height:334px}
.v i{display:block;width:12px;height:14px;background:#ccc;margin-top:6px}
.ch{color:#666;font-size:10px;line-height:10px}
.h{display:flex;align-items:center;height:15px;background:#f0f0f0;width:1004px;color:#555;font-size:11px;padding-left:5px}
.h i{display:block;width:14px;height:13px;background:#d4d4d4;margin-left:5px}`,
()=>`<sn-mbar items="Print:47|Edit:49|View:49|Tracks:49" style="height:16px;background:#424242;padding-left:5px;border-radius:0;--it:#4c4c4c;--tx:#8e8e8e"></sn-mbar>
<div class="tr">${mag('+',16)}<div class="sl"></div>${mag('-',16)}
<div class="b" style="width:72px;margin-left:13px;padding-left:2px">${ICON.lyrics}<span style="margin-left:10px">Lyrics</span></div>
<div class="b" style="width:72px;padding-left:6px">${ICON.chords}<span style="margin-left:8px">Chords</span></div>
<div class="b" style="width:69px;padding-left:6px"><span style="font:italic bold 18px 'Liberation Serif',serif;color:#ddd;width:12px">f</span><span>Expression</span></div>
<div class="b" style="width:72px;padding-left:3px">${ICON.hairpin}<span style="margin-left:8px">Hairpin</span></div>
<div class="b" style="width:72px;padding-left:6px">${ICON.pedal}<span style="margin-left:15px">Pedal</span></div>
<div class="tm">1:01:000</div></div>
<svg class="rl" width="1004" height="35" viewBox="229 307 1004 35"><rect x="229" y="307" width="1004" height="35" fill="#333"/><rect x="229.500" y="307.500" width="1003" height="34" fill="none" stroke="#666"/><rect x="513" y="324" width="720" height="17" fill="#c8c3c3"/>
<path d="M400.500 325V308h9l-8 9" fill="#2aa52a" stroke="#2aa52a"/><path d="M401 333v8h112M401 336h88M424 336v4M447 336v4M470 336v4M513 336h242M570 336v4M627 336v4M684 336v4M761 336h240M820 336v4M880 336v4M940 336v4M761 332v8M1007 332v8" stroke="#888" fill="none"/>
<text x="404" y="334" font-size="10" font-family="Liberation Sans" fill="#bbb">1</text><text x="515" y="334" font-size="10" font-family="Liberation Sans" fill="#555">2</text><text x="763" y="334" font-size="10" font-family="Liberation Sans" fill="#555">3</text><text x="1009" y="334" font-size="10" font-family="Liberation Sans" fill="#555">4</text></svg>
<div class="mid"><sn-score></sn-score><div class="v"><span class="ch" style="margin-top:2px">⌃</span><i></i><span class="ch" style="margin-top:auto;margin-bottom:4px">⌄</span></div></div>
<div class="h">‹<i></i><span style="margin-left:auto;margin-right:17px">›</span></div>`);

def('sn-tabs',`:host{display:flex;height:24px;background:#3c3c3c;padding:6px 0 3px 3px;align-items:stretch;font-size:10px;color:#999;flex:none;gap:2px}
.t{display:flex;align-items:center;padding-left:8px;background:#444;flex:none}
.on{background:#555;color:#ddd;font-weight:bold;justify-content:space-between;padding:0 3px 0 10px}
.r{margin-left:auto;display:flex;align-items:center;gap:4px;padding-right:11px;color:#bbb;font-size:8px}`,
()=>`<div class="t" style="width:67px">Console</div><div class="t on" style="width:130px">Staff - Multiple tracks<span style="font-weight:normal;color:#bbb">X</span></div><div class="t" style="width:128px;padding-left:13px">Piano Roll - Bari_Sax</div><div class="t" style="width:80px;margin-left:3px;padding-left:11px">Meter/Key</div><div class="r">${ICON.tile}<span>▼</span><span>▼</span></div>`);

def('sn-app',`:host{display:block;width:1204px;height:720px;margin-left:38px;background:#262626;overflow:hidden;filter:blur(.35px)}
.m{display:flex;height:616px}.c{width:1016px;flex:none}.t{display:flex}`,
()=>`<sn-titlebar></sn-titlebar><sn-menubar></sn-menubar><sn-toolbar></sn-toolbar>
<div class="m"><sn-inspector></sn-inspector><div class="c"><div class="t"><sn-track></sn-track><sn-side></sn-side></div><sn-staff></sn-staff><sn-tabs></sn-tabs></div></div>`);
</script>
</body></html>
